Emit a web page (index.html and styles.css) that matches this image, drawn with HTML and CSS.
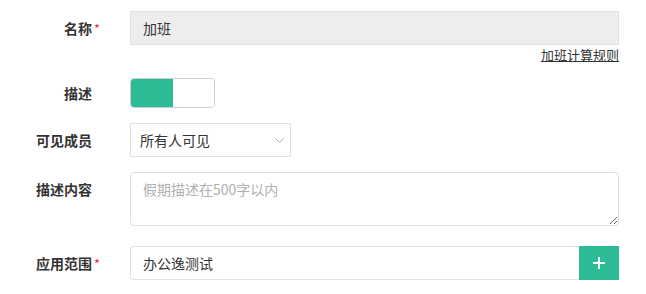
FILE: index.html
```html
<!DOCTYPE html>
<html lang="zh">
<head>
<meta charset="utf-8">
<link rel="stylesheet" href="styles.css">
</head>
<body>
<form class="form">
  <div class="row row-name">
    <label class="label required">名称</label>
    <div class="control">
      <div class="input input-disabled">加班</div>
    </div>
  </div>
  <div class="row row-link">
    <div class="label"></div>
    <div class="control link-wrap"><a class="rule-link">加班计算规则</a></div>
  </div>
  <div class="row row-toggle">
    <label class="label">描述</label>
    <div class="control">
      <div class="toggle"><span class="toggle-on"></span><span class="toggle-off"></span></div>
    </div>
  </div>
  <div class="row row-select">
    <label class="label">可见成员</label>
    <div class="control">
      <div class="select">
        <span>所有人可见</span>
        <svg class="chevron" width="9" height="5" viewBox="0 0 9 5"><path d="M0.5 0.5 L4.5 4.5 L8.5 0.5" fill="none" stroke="#aaa" stroke-width="1"/></svg>
      </div>
    </div>
  </div>
  <div class="row row-textarea">
    <label class="label">描述内容</label>
    <div class="control">
      <textarea class="textarea" placeholder="假期描述在500字以内"></textarea>
    </div>
  </div>
  <div class="row row-scope">
    <label class="label required">应用范围</label>
    <div class="control scope">
      <div class="input scope-input">办公逸测试</div>
      <button type="button" class="add-btn">
        <svg width="14" height="14" viewBox="0 0 14 14"><path d="M7 1 V13 M1 7 H13" stroke="#fff" stroke-width="2"/></svg>
      </button>
    </div>
  </div>
</form>
</body>
</html>
```
FILE: styles.css
```css
* { box-sizing: border-box; }
html, body {
  margin: 0;
  padding: 0;
  background: #fff;
  font-family: "Noto Sans CJK SC", "Noto Sans", sans-serif;
  font-size: 14px;
  color: #333;
}
.form {
  padding-top: 11px;
  width: 646px;
}
.row {
  display: flex;
  align-items: center;
}
.label {
  position: relative;
  width: 92px;
  flex: 0 0 92px;
  text-align: right;
  font-weight: bold;
  color: #333;
  font-size: 14px;
  line-height: 34px;
}
.required::after {
  content: "*";
  position: absolute;
  left: 100%;
  margin-left: 2px;
  top: 1px;
  color: #e23c3c;
  font-weight: normal;
  font-size: 13px;
}
.control {
  margin-left: 38px;
  width: 489px;
}
.input {
  height: 34px;
  line-height: 32px;
  border: 1px solid #e2e2e2;
  padding: 0 12px;
  font-size: 14px;
  color: #333;
}
.input-disabled {
  background: #ededed;
  border-color: #e0e0e0;
}
.row-link {
  height: 19px;
  margin-bottom: 12px;
}
.row-link .label { line-height: 19px; }
.link-wrap {
  text-align: right;
  line-height: 19px;
}
.rule-link {
  color: #333;
  text-decoration: underline;
  font-size: 13px;
  cursor: pointer;
}
.row-toggle {
  margin-bottom: 13px;
}
.toggle {
  width: 85px;
  height: 30px;
  border: 1px solid #cfcfcf;
  border-radius: 4px;
  display: flex;
  overflow: hidden;
}
.toggle-on {
  width: 42px;
  background: #2bbc96;
}
.toggle-off {
  flex: 1;
  background: #fff;
}
.row-select {
  margin-bottom: 15px;
}
.select {
  width: 161px;
  height: 34px;
  border: 1px solid #e2e2e2;
  padding: 0 6px 0 9px;
  display: flex;
  align-items: center;
  justify-content: space-between;
  color: #333;
  font-size: 14px;
}
.row-textarea {
  align-items: flex-start;
  margin-bottom: 20px;
}
.textarea {
  display: block;
  width: 489px;
  height: 54px;
  border: 1px solid #e0e0e0;
  border-radius: 4px;
  padding: 5px 12px;
  font-family: "Noto Sans CJK SC", "Noto Sans", sans-serif;
  font-size: 14px;
  line-height: 22px;
  color: #333;
  resize: both;
  margin: 0;
}
.textarea::placeholder { color: #b0b0b0; }
.scope {
  display: flex;
}
.scope-input {
  flex: 1;
  border-radius: 4px 0 0 4px;
  border-right: none;
}
.add-btn {
  width: 40px;
  height: 34px;
  border: none;
  padding: 0;
  margin: 0;
  background: #2bbc96;
  display: flex;
  align-items: center;
  justify-content: center;
}
```
